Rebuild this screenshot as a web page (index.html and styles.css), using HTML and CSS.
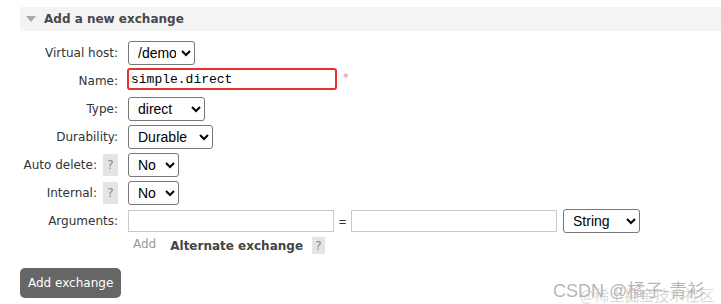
FILE: index.html
```html
<!DOCTYPE html>
<html>

<head>
    <meta charset="UTF-8">
    <link rel="stylesheet" href="styles.css">
    <title>Add a new exchange</title>
</head>

<body>
    <div class="section">
        <div class="sectionHeader">
            <span class="arrow"></span>
            <span class="sectionTitle">Add a new exchange</span>
        </div>
        <div class="form">
            <div class="label">Virtual host:</div>
            <div class="field">
                <select class="select w67">
                    <option>/demo</option>
                </select>
            </div>

            <div class="label">Name:</div>
            <div class="field nameField">
                <input class="nameInput" type="text" value="simple.direct">
                <span class="mandatory">*</span>
            </div>

            <div class="label">Type:</div>
            <div class="field">
                <select class="select w77">
                    <option>direct</option>
                </select>
            </div>

            <div class="label">Durability:</div>
            <div class="field">
                <select class="select w84">
                    <option>Durable</option>
                </select>
            </div>

            <div class="label">Auto delete: <span class="help">?</span></div>
            <div class="field">
                <select class="select w50">
                    <option>No</option>
                </select>
            </div>

            <div class="label">Internal: <span class="help">?</span></div>
            <div class="field">
                <select class="select w50">
                    <option>No</option>
                </select>
            </div>

            <div class="label">Arguments:</div>
            <div class="field">
                <input class="argInput" type="text">
                <span class="equals">=</span>
                <input class="argInput" type="text">
                <select class="select w77 argType">
                    <option>String</option>
                </select>
            </div>

            <div class="label"></div>
            <div class="field addRow">
                <span class="addLink">Add</span>
                <span class="altExchange">Alternate exchange</span>
                <span class="help small">?</span>
            </div>
        </div>
        <div class="button">Add exchange</div>
    </div>

    <div class="watermark">
        <span class="wmMain">CSDN @橘子-青衫</span>
        <span class="wmSub">@稀土掘金技术社区</span>
    </div>
</body>

</html>
```

FILE: styles.css
```css
body {
    margin: 0;
    font-family: "DejaVu Sans", Verdana, sans-serif;
    font-size: 12px;
    color: #333;
    background: white;
}

.section {
    padding: 7px 0 0 20px;
}

.sectionHeader {
    background: #f4f4f4;
    height: 24px;
    display: flex;
    align-items: center;
    gap: 8px;
    padding-left: 6px;
}

.arrow {
    width: 0;
    height: 0;
    border-left: 5px solid transparent;
    border-right: 5px solid transparent;
    border-top: 6px solid #aaa;
}

.sectionTitle {
    font-weight: bold;
    font-size: 12px;
    color: #484848;
}

.form {
    display: grid;
    grid-template-columns: 98px auto;
    grid-template-rows: repeat(7, 24px) auto;
    column-gap: 10px;
    row-gap: 4px;
    margin-top: 10px;
    align-items: center;
}

.label {
    text-align: right;
    display: flex;
    justify-content: flex-end;
    align-items: center;
    gap: 6px;
}

.field {
    display: flex;
    align-items: center;
}

.nameField {
    align-self: start;
    margin-top: -1px;
}

.select {
    font-family: "Liberation Sans", Arial, sans-serif;
    font-size: 14px;
    height: 24px;
    border: 1px solid #767676;
    border-radius: 3px;
    background: white;
    color: black;
    padding: 0 2px 0 5px;
}

.w50 { width: 51px; }
.w67 { width: 67px; }
.w77 { width: 77px; }
.w84 { width: 85px; }

.nameInput {
    width: 202px;
    height: 18px;
    border: 2px solid #e8302c;
    border-radius: 3px;
    font-family: "Liberation Mono", "Courier New", monospace;
    font-size: 13px;
    padding: 0 2px;
    margin-left: -1px;
    color: black;
}

.mandatory {
    color: #f08080;
    font-size: 11px;
    margin-left: 6px;
    align-self: flex-start;
    margin-top: 3px;
}

.help {
    background: #e4e4e4;
    color: #888;
    font-size: 12px;
    width: 15px;
    height: 22px;
    display: inline-flex;
    justify-content: center;
    align-items: center;
}

.help.small {
    width: 13px;
    height: 17px;
}

.argInput {
    width: 200px;
    height: 18px;
    border: 1px solid #c8c8c8;
    padding: 1px 2px;
}

.equals {
    width: 17px;
    text-align: center;
    font-family: "Liberation Sans", Arial, sans-serif;
    font-size: 13px;
}

.argType {
    margin-left: 6px;
}

.addRow {
    gap: 14px;
}

.addLink {
    color: #999;
    margin-left: 5px;
    align-self: flex-start;
}

.altExchange {
    font-weight: bold;
    color: #444;
    margin-right: -5px;
}

.button {
    display: inline-block;
    margin-top: 14px;
    background: #666;
    color: white;
    border-radius: 5px;
    padding: 8px 8px;
}

.watermark {
    position: absolute;
    left: 553px;
    top: 276px;
    width: 170px;
    height: 30px;
}

.wmMain {
    position: absolute;
    left: 0;
    top: 0;
    font-family: "Liberation Sans", "Noto Sans CJK SC", sans-serif;
    font-size: 18px;
    color: rgba(150, 150, 150, 0.7);
    white-space: nowrap;
}

.wmSub {
    position: absolute;
    left: 27px;
    top: 8px;
    font-family: "Noto Sans CJK SC", sans-serif;
    font-size: 15px;
    color: rgba(190, 190, 190, 0.6);
    white-space: nowrap;
}
```
